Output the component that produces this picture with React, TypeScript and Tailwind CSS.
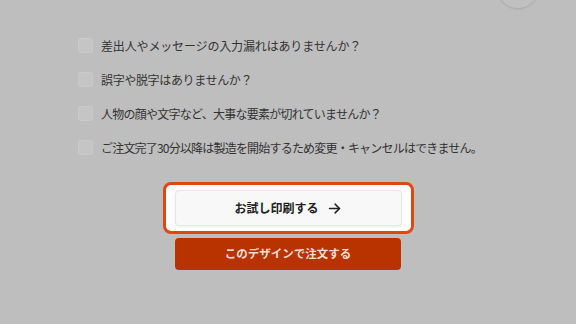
import React from "react";

const items = [
  { t: "差出人やメッセージの入力漏れはありませんか？", c: "tracking-[-0.15px]" },
  { t: "誤字や脱字はありませんか？", c: "tracking-[-0.35px]" },
  { t: "人物の顔や文字など、大事な要素が切れていませんか？", c: "tracking-[-0.75px]" },
  { t: "ご注文完了30分以降は製造を開始するため変更・キャンセルはできません。", c: "tracking-[-0.8px]" },
];

export default function App() {
  return (
    <div
      className="relative w-[576px] h-[324px] overflow-hidden bg-[#bebebe]"
      style={{ fontFamily: '"Noto Sans CJK JP", "Noto Sans", sans-serif' }}
    >
      <div className="absolute left-[497px] top-[-34px] w-[42px] h-[42px] rounded-full bg-[#c0c0c0] shadow-[0_1px_2px_rgba(0,0,0,0.12)]" />
      <div className="flex flex-col gap-[19px] pl-[78px] pt-[38px]">
        {items.map((it) => (
          <div key={it.t} className="flex items-center gap-[8px] h-[15px]">
            <div className="w-[15px] h-[15px] rounded-[2px] bg-[#c5c5c5] border border-[#c9c9c9]" />
            <span className={"text-[12px] leading-none text-[#333333] " + it.c}>{it.t}</span>
          </div>
        ))}
      </div>
      <div className="flex flex-col items-center mt-[27px]">
        <div className="w-[251px] h-[52px] rounded-[8px] border-[3px] border-[#e0470f] bg-white flex items-center justify-center">
          <div className="w-[227px] h-[36px] rounded-[4px] bg-[#f8f8f8] border border-[#e6e6e6] shadow-[0_1px_2px_rgba(0,0,0,0.08)] flex items-center justify-center gap-[8px]">
            <span className="text-[12px] font-bold text-[#222222] leading-none">お試し印刷する</span>
            <svg width="15" height="15" viewBox="0 0 24 24" fill="none" stroke="#222" strokeWidth="2.4" strokeLinecap="round" strokeLinejoin="round">
              <path d="M4 12h16" />
              <path d="M13 5l7 7-7 7" />
            </svg>
          </div>
        </div>
        <div className="mt-[4px] w-[226px] h-[32px] rounded-[4px] bg-[#b83300] flex items-center justify-center">
          <span className="text-[11.5px] font-bold text-[#f3ddd3] leading-none">このデザインで注文する</span>
        </div>
      </div>
    </div>
  );
}
